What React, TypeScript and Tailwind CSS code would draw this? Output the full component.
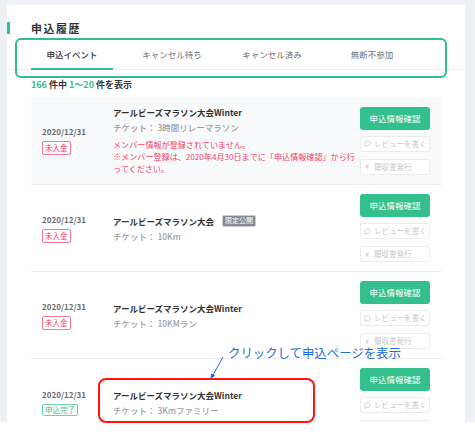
import React from "react";

const FONT = { fontFamily: '"Noto Sans CJK JP", "Noto Sans", sans-serif' };

type Entry = {
  title: string;
  ticket: string;
  status: "unpaid" | "done";
  tag?: string;
  notice?: string[];
  shaded?: boolean;
};

const entries: Entry[] = [
  {
    title: "アールビーズマラソン大会Winter",
    ticket: "チケット： 3時間リレーマラソン",
    status: "unpaid",
    shaded: true,
    notice: [
      "メンバー情報が登録されていません。",
      "※メンバー登録は、2020年4月30日までに「申込情報確認」から行",
      "ってください。",
    ],
  },
  {
    title: "アールビーズマラソン大会",
    ticket: "チケット： 10Km",
    status: "unpaid",
    tag: "限定公開",
  },
  {
    title: "アールビーズマラソン大会Winter",
    ticket: "チケット： 10KMラン",
    status: "unpaid",
  },
  {
    title: "アールビーズマラソン大会Winter",
    ticket: "チケット： 3Kmファミリー",
    status: "done",
  },
];

const tabs = ["申込イベント", "キャンセル待ち", "キャンセル済み", "無断不参加"];

function Bubble() {
  return (
    <svg width="7" height="7" viewBox="0 0 10 10" fill="none" stroke="#c9c9c9" strokeWidth="1.2">
      <path d="M5 1.2c2.2 0 4 1.5 4 3.4S7.2 8 5 8c-.5 0-1 0-1.4-.2L1.5 9l.5-2C1.4 6.4 1 5.5 1 4.6 1 2.7 2.8 1.2 5 1.2z" />
    </svg>
  );
}

function Row({ e }: { e: Entry }) {
  return (
    <div
      className={`flex items-center border-b border-[#eeeeee] py-[9px] pl-[11px] pr-[12px] ${
        e.shaded ? "bg-[#f8f9fb]" : "bg-white"
      }`}
    >
      <div className="w-[71px] shrink-0 flex flex-col items-start">
        <div className="text-[8px] leading-[12px] font-bold text-[#6b6b6b]">2020/12/31</div>
        {e.status === "unpaid" ? (
          <div className="mt-[3px] h-[14px] px-[2px] flex items-center border border-[#f27a92] rounded-[2px] text-[7.5px] leading-none text-[#f0446a]">
            未入金
          </div>
        ) : (
          <div className="mt-[3px] h-[12px] px-[2px] flex items-center border border-[#6fd4ad] rounded-[2px] text-[7.5px] leading-none text-[#3bbf8e]">
            申込完了
          </div>
        )}
      </div>
      <div className="flex-1 min-w-0">
        <div className="flex items-center gap-[8px]">
          <div className="text-[8.5px] leading-[12px] font-bold text-[#333333] whitespace-nowrap">{e.title}</div>
          {e.tag && (
            <div className="h-[12px] px-[2px] flex items-center bg-[#858b91] border border-[#c9cdd1] rounded-[2px] text-[7px] leading-none text-white">
              {e.tag}
            </div>
          )}
        </div>
        <div className="mt-[3px] text-[8.5px] leading-[12px] font-medium text-[#a0a0a0] whitespace-nowrap">{e.ticket}</div>
        {e.notice && (
          <div className="mt-[6px] text-[8.1px] leading-[12px] text-[#f0446a] whitespace-nowrap">
            {e.notice.map((l) => (
              <div key={l}>{l}</div>
            ))}
          </div>
        )}
      </div>
      <div className="w-[70px] shrink-0 flex flex-col">
        <div className="h-[23px] rounded-[3px] bg-[#34c08d] flex items-center justify-center text-[8.5px] text-white">
          申込情報確認
        </div>
        <div className="mt-[6px] h-[16px] border border-[#ececec] rounded-[2px] bg-white flex items-center pl-[3px] gap-[3px] text-[7.5px] text-[#c6c6c6]">
          <Bubble />
          <span>レビューを書く</span>
        </div>
        <div className="mt-[7px] h-[16px] border border-[#ececec] rounded-[2px] bg-white flex items-center pl-[4px] gap-[5px] text-[7.5px] text-[#c6c6c6]">
          <span className="text-[7px]">¥</span>
          <span>領収書発行</span>
        </div>
      </div>
    </div>
  );
}

export default function App() {
  return (
    <div className="relative w-[475px] h-[436px] bg-white overflow-hidden" style={FONT}>
      <div className="h-[422px] bg-[#eef2f6] pt-[5px] pl-[7px] pr-[10px] flex overflow-hidden">
        <div className="relative flex-1 min-w-0 bg-white pt-[17px]">
          {/* section header */}
          <div className="flex items-center h-[12px]">
            <div className="w-[3px] h-[12px] bg-[#34c08d]" />
            <div className="ml-[21px] text-[11px] font-bold tracking-[1.5px] text-[#333333] leading-none">申込履歴</div>
          </div>

          {/* tabs */}
          <div className="mt-[7px] flex pl-[24px] gap-[18px] border-b border-[#eeeeee]">
            {tabs.map((t, i) => (
              <div
                key={t}
                className={`w-[82px] h-[29px] -mb-px flex items-center justify-center text-[8.5px] ${
                  i === 0
                    ? "border-b-2 border-[#34c08d] text-[#333333] font-medium"
                    : "border-b-2 border-transparent text-[#707070]"
                }`}
              >
                {t}
              </div>
            ))}
          </div>
          <div className="absolute left-[8px] top-[33px] w-[432px] h-[40px] border-2 border-[#2fbd8a] rounded-[6px] pointer-events-none" />

          {/* count */}
          <div className="mt-[9px] pl-[24px] text-[9px] leading-[12px] font-bold text-[#333333]">
            <span className="text-[#34c08d]">166</span> 件中 <span className="text-[#34c08d]">1〜20</span> 件を表示
          </div>

          {/* list */}
          <div className="mt-[6px] ml-[24px] mr-[23px]">
            {entries.map((e, i) => (
              <Row key={i} e={e} />
            ))}
          </div>
        </div>
      </div>

      {/* callouts */}
      <div className="absolute left-[98px] top-[378px] w-[217px] h-[45px] border-2 border-[#ff1414] rounded-[8px]" />
      <div className="absolute left-[228px] top-[345px] text-[12.4px] leading-[16px] text-[#1d6fe0] whitespace-nowrap">
        クリックして申込ページを表示
      </div>
      <svg className="absolute left-0 top-0" width="475" height="436" viewBox="0 0 475 436" fill="none">
        <line x1="223" y1="357" x2="212.5" y2="376" stroke="#1d6fe0" strokeWidth="1" />
        <path d="M210.5 379.5 L211 373.5 L215 375.6 Z" fill="#1d6fe0" />
      </svg>
    </div>
  );
}
